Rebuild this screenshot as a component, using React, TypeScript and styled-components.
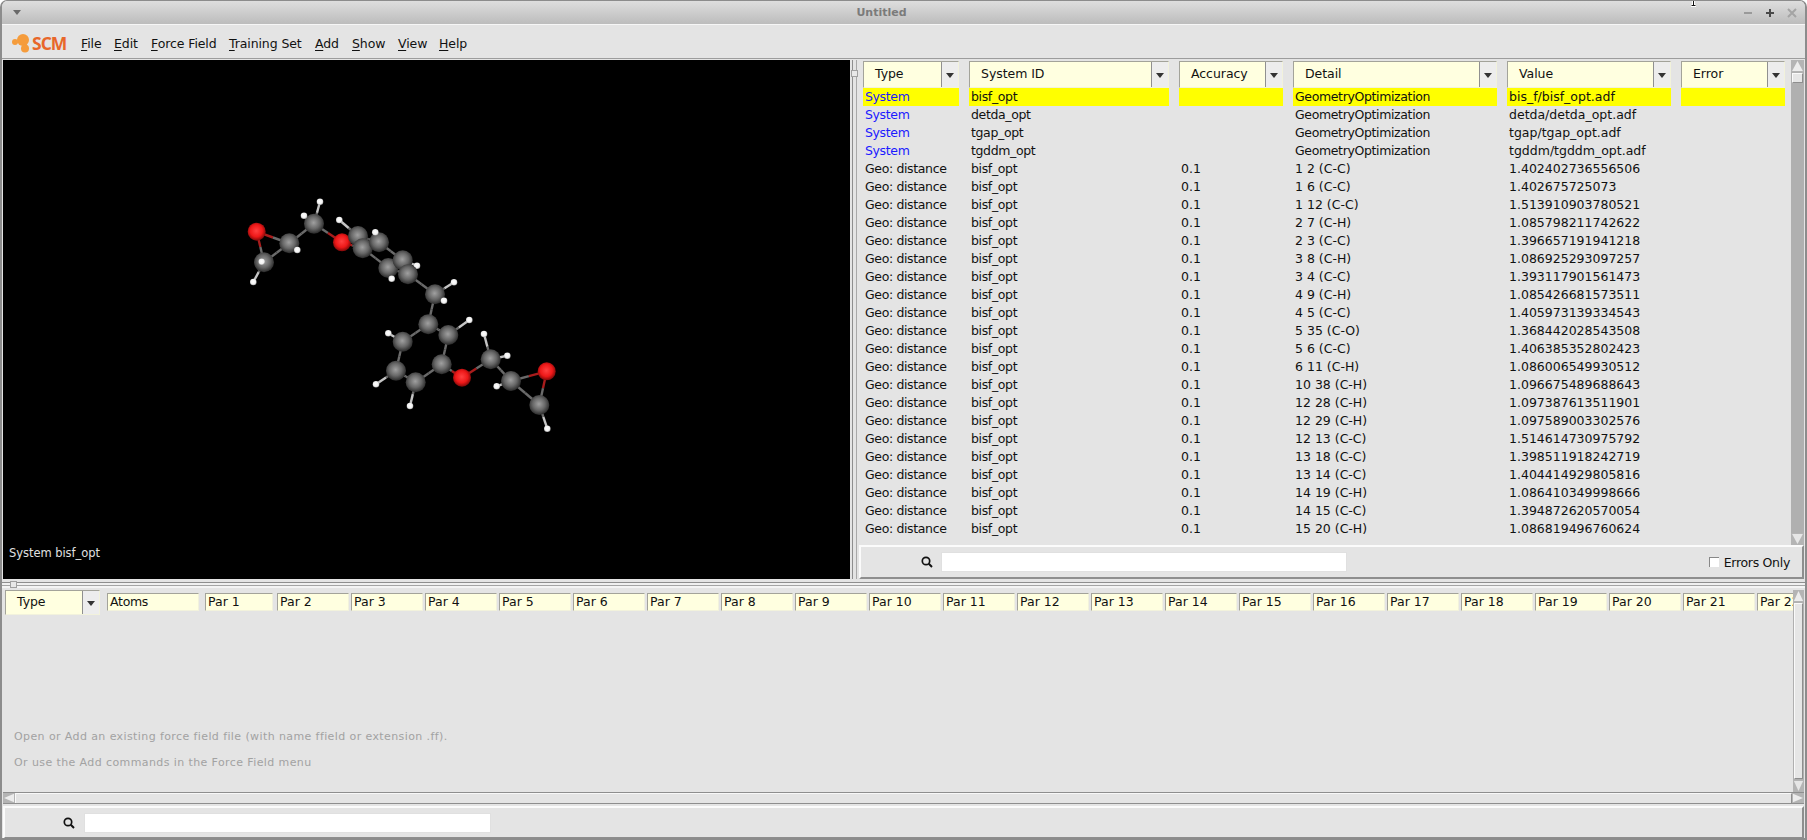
import React from "react";
import styled, { createGlobalStyle } from "styled-components";

const Global = createGlobalStyle`
  html, body { margin: 0; padding: 0; background: #fff; }
  #root { width: 1807px; height: 840px; overflow: hidden; }
  * { box-sizing: border-box; }
`;

const Win = styled.div`
  position: relative;
  width: 1807px; height: 840px;
  display: flex; flex-direction: column;
  background: #e4e4e4;
  border: 2px solid #8c8c8c;
  border-top-width: 1px;
  border-radius: 7px 7px 0 0;
  overflow: hidden;
  font-family: "DejaVu Sans", sans-serif;
  font-size: 12.5px;
  color: #111;
`;
const TitleBar = styled.div`
  position: relative;
  height: 24px; flex: none;
  display: flex; align-items: center; justify-content: space-between;
  padding: 0 6px 0 11px;
  background: linear-gradient(#dedede, #bcbcbc);
  border-bottom: 1px solid #f6f6f6;
`;
const MenuTriangle = styled.span`
  width: 0; height: 0;
  border-left: 4px solid transparent; border-right: 4px solid transparent;
  border-top: 5px solid #6a6a6a;
`;
const Title = styled.span`
  position: absolute; left: 0; right: 44px; top: 5px; text-align: center;
  font-weight: bold; font-size: 11px; line-height: 14px; color: #7b7b7b;
`;
const WinButtons = styled.div`
  display: flex; gap: 8px; align-items: center;
`;
const MenuBar = styled.div`
  height: 34px; flex: none;
  display: flex; align-items: center;
  padding: 3px 0 0 9px;
  border-bottom: 1px solid #9c9c9c;
`;
const Logo = styled.div`
  display: flex; align-items: center; width: 68px; height: 20px;
`;
const LogoText = styled.span`
  font-family: "Open Sans", sans-serif;
  font-weight: 700; font-size: 17.5px; letter-spacing: -1px;
  color: #e8672a;
`;
const MenuList = styled.div`display: flex; margin-left: 2px;`;
const MenuItem = styled.span<{ $w: number }>`
  width: ${(p) => p.$w}px;
  font-size: 12.5px;
  letter-spacing: -0.1px;
  u { text-underline-offset: 2px; }
`;
const TopPane = styled.div`
  height: 520px; flex: none; display: flex;
  margin-top: 1px;
  padding-left: 1px;
`;
const Viewer = styled.div`
  position: relative;
  width: 847px; height: 519px; flex: none;
  background: #000;
`;
const ViewerSvg = styled.svg`display: block; width: 100%; height: 100%;`;
const ViewerLabel = styled.div`
  position: absolute; left: 6px; bottom: 19px;
  color: #e0e0e0; font-size: 11.5px; line-height: 14px; letter-spacing: -0.05px;
`;
const VSplit = styled.div`
  position: relative; width: 9px; flex: none; height: 519px;
  background: linear-gradient(90deg, #e4e4e4 2px, #8e8e8e 2px, #8e8e8e 3px, #e4e4e4 3px, #e4e4e4 6px, #a8a8a8 6px, #a8a8a8 7px, #e4e4e4 7px);
`;
const SplitHandle = styled.div`
  position: absolute; width: 7px; height: 7px;
  background: #e8e8e8; border: 1px solid #a0a0a0;
`;
const VHandle = styled(SplitHandle)`left: 1px; top: 10px;`;
const HHandle = styled(SplitHandle)`left: 8px; top: 1px;`;
const RightPane = styled.div`
  width: 945px; flex: none; display: flex; flex-direction: column; height: 519px;
`;
const TableArea = styled.div`height: 485px; flex: none; display: flex;`;
const TableMain = styled.div`
  width: 932px; flex: none; padding: 1px 0 0 4px; overflow: hidden;
`;
const Cols = styled.div`
  display: grid;
  grid-template-columns: 96px 200px 104px 204px 164px 104px;
  column-gap: 10px;
`;
const HeadCell = styled.div`
  height: 27px; display: flex; align-items: stretch;
  background: #ffffe0;
  border-top: 1px solid #a3a39a; border-left: 1px solid #a3a39a;
  border-right: 1px solid #f2f2dc; border-bottom: 1px solid #f2f2dc;
`;
const HeadLabel = styled.span<{ $lh?: number }>`
  flex: 1; padding-left: 11px; line-height: ${(p) => p.$lh ?? 24}px; font-size: 12.5px;
  letter-spacing: -0.05px;
`;
const HeadArrow = styled.span`
  width: 17px; flex: none; display: flex; align-items: center; justify-content: center;
  background: #ededed; border-left: 1px solid #909090;
  &::after {
    content: ""; width: 0; height: 0; margin-top: 2px;
    border-left: 4px solid transparent; border-right: 4px solid transparent;
    border-top: 5px solid #333;
  }
`;
const Cell = styled.div<{ $sel?: boolean; $blue?: boolean; $tight?: boolean }>`
  height: 18px; line-height: 18px; padding-left: 2px; white-space: nowrap; overflow: hidden;
  letter-spacing: ${(p) => (p.$tight ? "-0.36px" : "0")};
  background: ${(p) => (p.$sel ? "#ffff00" : "transparent")};
  color: ${(p) => (p.$blue ? "#1a1aff" : "#111")};
`;
const VScroll = styled.div<{ $w: number }>`
  width: ${(p) => p.$w}px; flex: none; display: flex; flex-direction: column;
  background: #b0b0b0;
`;
const ArrowBtn = styled.svg`display: block; width: 100%; flex: none;`;
const VThumb = styled.div<{ $h?: number; $grow?: boolean }>`
  height: ${(p) => (p.$h ? p.$h + "px" : "auto")};
  flex: ${(p) => (p.$grow ? 1 : "none")};
  margin: 1px;
  background: #e6e6e6;
  border-bottom: 1px solid #8e8e8e; border-right: 1px solid #8e8e8e;
  border-top: 1px solid #fafafa; border-left: 1px solid #fafafa;
`;
const Track = styled.div`flex: 1; background: #b0b0b0;`;
const SearchPanel = styled.div`
  height: 34px; flex: none; display: flex; align-items: center;
  background: #e4e4e4;
  border-top: 2px solid #fbfbfb; border-left: 2px solid #fbfbfb;
  border-bottom: 2px solid #8e8e8e; border-right: 2px solid #8e8e8e;
`;
const SearchIcon = styled.svg<{ $ml: number }>`
  width: 12px; height: 12px; flex: none; margin-left: ${(p) => p.$ml}px;
`;
const SearchInput = styled.div<{ $w: number; $ml: number }>`
  width: ${(p) => p.$w}px; height: 20px; margin-left: ${(p) => p.$ml}px;
  background: #fff; border: 1px solid #e0e0e0;
`;
const ErrorsOnly = styled.label`
  margin-left: auto; margin-right: 12px;
  display: flex; align-items: center; gap: 5px; font-size: 12.5px; letter-spacing: -0.3px;
`;
const Check = styled.span`
  width: 10px; height: 10px; background: #fff;
  border-top: 1px solid #888; border-left: 1px solid #888;
`;
const HSplit = styled.div`
  position: relative; height: 10px; flex: none;
  background: linear-gradient(#e4e4e4 2px, #8e8e8e 2px, #8e8e8e 3px, #f0f0f0 3px, #f0f0f0 5px, #a4a4a4 5px, #a4a4a4 6px, #f4f4f4 6px, #f4f4f4 8px, #e4e4e4 8px);
`;
const BottomPane = styled.div`
  height: 202px; flex: none; display: flex; padding-left: 1px;
`;
const BottomMain = styled.div`
  width: 1790px; flex: none; display: flex; flex-direction: column; overflow: hidden; padding-left: 2px;
`;
const ParRow = styled.div`display: flex; align-items: flex-start; gap: 2px;`;
const TypeCell = styled(HeadCell)`width: 95px; flex: none; height: 25px;`;
const ParCell = styled.div<{ $w?: number; $ml?: number; $mr?: number; $tight?: boolean }>`
  width: ${(p) => p.$w ?? 72}px; flex: none; height: 18px; margin-top: 3px;
  margin-left: ${(p) => p.$ml ?? 0}px; margin-right: ${(p) => p.$mr ?? 0}px;
  padding-left: 2px; line-height: 16px; white-space: nowrap;
  letter-spacing: ${(p) => (p.$tight ? "-0.3px" : "0")};
  background: #ffffe0;
  border-top: 1px solid #a3a39a; border-left: 1px solid #a3a39a;
  border-right: 1px solid #f2f2dc; border-bottom: 1px solid #f2f2dc;
`;
const Notes = styled.div`
  margin-top: 109px; padding-left: 9px;
  color: #a2a2a2; font-size: 11px; line-height: 26px; letter-spacing: .4px;
`;
const HScroll = styled.div`
  height: 12px; flex: none; margin-left: 1px; width: 1801px; display: flex;
  background: #e4e4e4;
  border-top: 1px solid #8e8e8e; border-bottom: 1px solid #8e8e8e;
`;
const HBtn = styled.svg`display: block; width: 12px; height: 10px; flex: none;`;
const HThumb = styled.div`flex: 1; border-left: 1px solid #fafafa; border-right: 1px solid #8e8e8e; border-top: 1px solid #f8f8f8;`;
const BottomPanel = styled(SearchPanel)`
  margin: 2px 0 0 1px; width: 1801px; height: 33px;
`;
const Cursor = styled.svg`
  position: absolute; left: 1687px; top: -1px; width: 9px; height: 7px;
`;

const H = "H", C = "C", O = "O";
type A = [string, number, number];
const atoms: Record<string, A> = {
  o1: [O, 256.7, 231.7], c1: [C, 264, 262.3], h1: [H, 261.7, 261.7], h2: [H, 253.3, 282],
  c2: [C, 289.3, 243.3], h3: [H, 297.3, 250], c3: [C, 314, 223.7], h4: [H, 320, 201.7], h5: [H, 304, 215.7],
  o2: [O, 342, 242.3], h6: [H, 339.3, 220], c4: [C, 358, 236], c5: [C, 362.7, 248.3], c6: [C, 379, 242.3],
  h7: [H, 375.3, 232.3], c7: [C, 388.3, 268], h8: [H, 391.7, 278.7], c8: [C, 402.7, 260.3], h9: [H, 417, 265.7],
  c9: [C, 408, 274.3], c10: [C, 435, 294.3], h10: [H, 454, 282.3], h11: [H, 444, 300.7], c11: [C, 428.3, 324.3],
  c12: [C, 448.3, 335], h12: [H, 469.3, 320], c13: [C, 402.7, 341.7], h13: [H, 388.3, 333.3], c14: [C, 441.7, 364.3],
  c15: [C, 396, 370.7], h14: [H, 376, 384.3], c16: [C, 415.7, 382.3], h15: [H, 410, 406], o3: [O, 462, 377.7],
  c17: [C, 490.7, 359.3], h16: [H, 484, 334], h17: [H, 507.3, 355.7], c18: [C, 511, 381], h18: [H, 496.7, 386.3],
  o4: [O, 546.7, 371.3], c19: [C, 539.3, 405], h19: [H, 547.3, 428.7],
};
const bonds = "o1-c1 o1-c2 c1-c2 c1-h2 c2-c3 c2-h3 c3-h4 c3-h5 c3-o2 o2-c5 c4-h6 c4-c5 c4-c6 c6-h7 c6-c8 c5-c7 c7-h8 c7-c9 c8-c9 c8-h9 c9-c10 c10-h10 c10-h11 c10-c11 c11-c12 c11-c13 c12-h12 c12-c14 c13-h13 c13-c15 c14-c16 c14-o3 c15-c16 c15-h14 c16-h15 o3-c17 c17-h16 c17-h17 c17-c18 c18-h18 c18-o4 c18-c19 o4-c19 c19-h19"
  .split(" ")
  .map((s) => s.split("-"));
const bondColor: Record<string, string> = { C: "#6a6a6a", O: "#a81c1c", H: "#c4c4c4" };
const radius: Record<string, number> = { C: 10, O: 9, H: 3.3 };
const fillFor: Record<string, string> = { C: "url(#gc)", O: "url(#go)", H: "url(#gh)" };

const Molecule = () => (
  <ViewerSvg viewBox="3 60 847 519">
    <defs>
      <radialGradient id="gc" cx="0.48" cy="0.45" r="0.56">
        <stop offset="0" stopColor="#a0a0a0" />
        <stop offset="0.55" stopColor="#686868" />
        <stop offset="1" stopColor="#262626" />
      </radialGradient>
      <radialGradient id="go" cx="0.48" cy="0.45" r="0.56">
        <stop offset="0" stopColor="#ff4040" />
        <stop offset="0.6" stopColor="#ee1818" />
        <stop offset="1" stopColor="#780808" />
      </radialGradient>
      <radialGradient id="gh" cx="0.48" cy="0.45" r="0.56">
        <stop offset="0" stopColor="#ffffff" />
        <stop offset="0.65" stopColor="#f2f2f2" />
        <stop offset="1" stopColor="#9a9a9a" />
      </radialGradient>
    </defs>
    {bonds.map(([a, b]) => {
      const p = atoms[a], q = atoms[b];
      const mx = (p[1] + q[1]) / 2, my = (p[2] + q[2]) / 2;
      return (
        <g key={a + b} strokeWidth="2.4">
          <line x1={p[1]} y1={p[2]} x2={mx} y2={my} stroke={bondColor[p[0]]} />
          <line x1={mx} y1={my} x2={q[1]} y2={q[2]} stroke={bondColor[q[0]]} />
        </g>
      );
    })}
    {Object.entries(atoms).map(([k, a]) => (
      <circle key={k} cx={a[1]} cy={a[2]} r={radius[a[0]]} fill={fillFor[a[0]]} />
    ))}
  </ViewerSvg>
);

const Up = () => (
  <ArrowBtn viewBox="0 0 12 12" height={12} preserveAspectRatio="none">
    <rect width="12" height="12" fill="#b4b4b4" />
    <polygon points="6,1 11,11 1,11" fill="#ececec" />
  </ArrowBtn>
);
const Down = () => (
  <ArrowBtn viewBox="0 0 12 12" height={12} preserveAspectRatio="none">
    <rect width="12" height="12" fill="#b4b4b4" />
    <polygon points="1,1 11,1 6,11" fill="#e6e6e6" />
  </ArrowBtn>
);
const Mag = ({ ml }: { ml: number }) => (
  <SearchIcon $ml={ml} viewBox="0 0 12 12">
    <circle cx="5" cy="5" r="3.7" fill="none" stroke="#111" strokeWidth="1.7" />
    <line x1="7.8" y1="7.8" x2="11" y2="11" stroke="#111" strokeWidth="2" />
  </SearchIcon>
);

const HEADS = ["Type", "System ID", "Accuracy", "Detail", "Value", "Error"];
const SYSTEMS = [
  ["bisf_opt", "bis_f/bisf_opt.adf"],
  ["detda_opt", "detda/detda_opt.adf"],
  ["tgap_opt", "tgap/tgap_opt.adf"],
  ["tgddm_opt", "tgddm/tgddm_opt.adf"],
];
const GEOS = [
  ["1 2 (C-C)", "1.402402736556506"],
  ["1 6 (C-C)", "1.402675725073"],
  ["1 12 (C-C)", "1.513910903780521"],
  ["2 7 (C-H)", "1.085798211742622"],
  ["2 3 (C-C)", "1.396657191941218"],
  ["3 8 (C-H)", "1.086925293097257"],
  ["3 4 (C-C)", "1.393117901561473"],
  ["4 9 (C-H)", "1.085426681573511"],
  ["4 5 (C-C)", "1.405973139334543"],
  ["5 35 (C-O)", "1.368442028543508"],
  ["5 6 (C-C)", "1.406385352802423"],
  ["6 11 (C-H)", "1.086006549930512"],
  ["10 38 (C-H)", "1.096675489688643"],
  ["12 28 (C-H)", "1.097387613511901"],
  ["12 29 (C-H)", "1.097589003302576"],
  ["12 13 (C-C)", "1.514614730975792"],
  ["13 18 (C-C)", "1.398511918242719"],
  ["13 14 (C-C)", "1.404414929805816"],
  ["14 19 (C-H)", "1.086410349998666"],
  ["14 15 (C-C)", "1.394872620570054"],
  ["15 20 (C-H)", "1.086819496760624"],
];
const MENUS: [string, string, number][] = [
  ["F", "ile", 33], ["E", "dit", 37], ["F", "orce Field", 78], ["T", "raining Set", 86],
  ["A", "dd", 37], ["S", "how", 46], ["V", "iew", 41], ["H", "elp", 40],
];

export default function App() {
  return (
    <Win>
      <Global />
      <TitleBar>
        <MenuTriangle />
        <Title>Untitled</Title>
        <WinButtons>
          <svg width="14" height="12" viewBox="0 0 14 12"><line x1="3" y1="6" x2="11" y2="6" stroke="#9a9a9a" strokeWidth="2" /></svg>
          <svg width="14" height="12" viewBox="0 0 14 12"><path d="M3 6H11M7 2V10" stroke="#4a4a4a" strokeWidth="2" /></svg>
          <svg width="14" height="12" viewBox="0 0 14 12"><path d="M3 2L11 10M11 2L3 10" stroke="#a4a4a4" strokeWidth="2" /></svg>
        </WinButtons>
      </TitleBar>
      <Cursor viewBox="0 0 9 7">
        <path d="M2 6H7M4.5 0V6" stroke="#fff" strokeWidth="3" />
        <path d="M2.5 5.5H6.5M4.5 0V5.5" stroke="#111" strokeWidth="1" />
      </Cursor>
      <MenuBar>
        <Logo>
          <svg width="21" height="20" viewBox="0 0 21 20">
            <circle cx="12" cy="7" r="6" fill="#f59c3c" />
            <circle cx="4" cy="9" r="3" fill="#f59c3c" />
            <circle cx="14" cy="15.5" r="4" fill="#f59c3c" />
          </svg>
          <LogoText>SCM</LogoText>
        </Logo>
        <MenuList>
          {MENUS.map(([a, b, w]) => (
            <MenuItem key={a + b} $w={w}><u>{a}</u>{b}</MenuItem>
          ))}
        </MenuList>
      </MenuBar>
      <TopPane>
        <Viewer>
          <Molecule />
          <ViewerLabel>System bisf_opt</ViewerLabel>
        </Viewer>
        <VSplit><VHandle /></VSplit>
        <RightPane>
          <TableArea>
            <TableMain>
              <Cols>
                {HEADS.map((h) => (
                  <HeadCell key={h}><HeadLabel>{h}</HeadLabel><HeadArrow /></HeadCell>
                ))}
              </Cols>
              {SYSTEMS.map(([id, v], i) => (
                <Cols key={id}>
                  <Cell $sel={i === 0} $blue $tight>System</Cell>
                  <Cell $sel={i === 0} $tight>{id}</Cell>
                  <Cell $sel={i === 0} />
                  <Cell $sel={i === 0} $tight>GeometryOptimization</Cell>
                  <Cell $sel={i === 0}>{v}</Cell>
                  <Cell $sel={i === 0} />
                </Cols>
              ))}
              {GEOS.map(([d, v]) => (
                <Cols key={d}>
                  <Cell $tight>Geo: distance</Cell>
                  <Cell $tight>bisf_opt</Cell>
                  <Cell>0.1</Cell>
                  <Cell>{d}</Cell>
                  <Cell>{v}</Cell>
                  <Cell />
                </Cols>
              ))}
            </TableMain>
            <VScroll $w={13}>
              <Up /><VThumb $h={10} /><Track /><Down />
            </VScroll>
          </TableArea>
          <SearchPanel>
            <Mag ml={60} />
            <SearchInput $w={406} $ml={8} />
            <ErrorsOnly><Check />Errors Only</ErrorsOnly>
          </SearchPanel>
        </RightPane>
      </TopPane>
      <HSplit><HHandle /></HSplit>
      <BottomPane>
        <BottomMain>
          <ParRow>
            <TypeCell><HeadLabel $lh={22}>Type</HeadLabel><HeadArrow /></TypeCell>
            <ParCell $w={92} $ml={5} $mr={4} $tight>Atoms</ParCell>
            <ParCell $w={68} $mr={2}>Par 1</ParCell>
            {Array.from({ length: 21 }, (_, i) => (
              <ParCell key={i}>Par {i + 2}</ParCell>
            ))}
          </ParRow>
          <Notes>
            <div>Open or Add an existing force field file (with name ffield or extension .ff).</div>
            <div>Or use the Add commands in the Force Field menu</div>
          </Notes>
        </BottomMain>
        <VScroll $w={11}>
          <Up /><VThumb $grow /><Down />
        </VScroll>
      </BottomPane>
      <HScroll>
        <HBtn viewBox="0 0 12 12" preserveAspectRatio="none"><rect width="12" height="12" fill="#b4b4b4" /><polygon points="1,6 11,1 11,11" fill="#ececec" /></HBtn>
        <HThumb />
        <HBtn viewBox="0 0 12 12" preserveAspectRatio="none"><rect width="12" height="12" fill="#b4b4b4" /><polygon points="1,1 11,6 1,11" fill="#ececec" /></HBtn>
      </HScroll>
      <BottomPanel>
        <Mag ml={58} />
        <SearchInput $w={407} $ml={9} />
      </BottomPanel>
    </Win>
  );
}
